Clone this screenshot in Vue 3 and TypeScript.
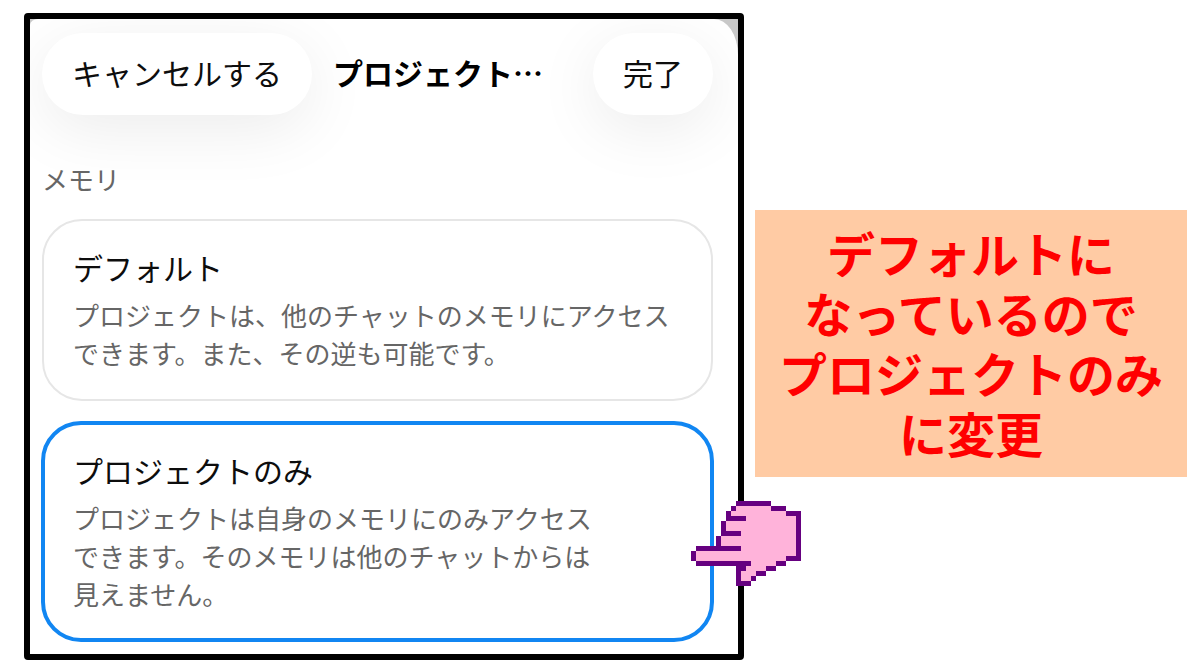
<script setup lang="ts">
import { ref } from 'vue'

interface MemoryOption {
  id: string
  title: string
  lines: string[]
}

const options: MemoryOption[] = [
  {
    id: 'default',
    title: 'デフォルト',
    lines: ['プロジェクトは、他のチャットのメモリにアクセス', 'できます。また、その逆も可能です。'],
  },
  {
    id: 'project',
    title: 'プロジェクトのみ',
    lines: [
      'プロジェクトは自身のメモリにのみアクセス',
      'できます。そのメモリは他のチャットからは',
      '見えません。',
    ],
  },
]

const selected = ref('project')

const noteLines = ['デフォルトに', 'なっているので', 'プロジェクトのみ', 'に変更']

// Pixel art: "#" is outline, "o" is fill, "." is empty.
const handRows = [
  '.........#######......',
  '........#ooooooo###...',
  '.......#ooooooooooo###',
  '.......####oooooooooo#',
  '......#oooooooooooooo#',
  '......#oooooooooooooo#',
  '......####ooooooooooo#',
  '.....#ooooooooooooooo#',
  '.....#ooooooooooooooo#',
  '.#########ooooooooooo#',
  '#oooooooooooooooooooo#',
  '#oooooooooooooooooo###',
  '.###########ooooo##...',
  '.........##oooo##.....',
  '.........#ooo##.......',
  '.........#oo#.........',
  '.........###..........',
]

function cells(mark: string): string {
  let d = ''
  handRows.forEach((row, y) => {
    for (let x = 0; x < row.length; x++) {
      if (row[x] === mark) d += `M${x} ${y}h1v1h-1z`
    }
  })
  return d
}

const outline = cells('#')
const fill = cells('o')
</script>

<template>
  <main class="page" lang="ja">
    <div class="phone">
      <div class="frame">
        <section class="sheet">
          <header class="bar">
            <button type="button" class="pill">キャンセルする</button>
            <h1 class="heading">プロジェクト…</h1>
            <button type="button" class="pill">完了</button>
          </header>
          <fieldset class="group">
            <legend class="legend">メモリ</legend>
            <div class="cards">
              <label
                v-for="o in options"
                :key="o.id"
                class="card"
                :class="{ selected: selected === o.id }"
              >
                <input v-model="selected" class="radio" type="radio" name="memory" :value="o.id" />
                <span class="title">{{ o.title }}</span>
                <span class="desc">
                  <span v-for="l in o.lines" :key="l" class="line">{{ l }}</span>
                </span>
              </label>
            </div>
          </fieldset>
        </section>
      </div>
      <svg class="hand" viewBox="0 0 22 17" aria-hidden="true" shape-rendering="crispEdges">
        <path :d="fill" fill="#ffb3da" />
        <path :d="outline" fill="#660080" />
      </svg>
    </div>
    <p class="note">
      <span v-for="l in noteLines" :key="l" class="line">{{ l }}</span>
    </p>
  </main>
</template>

<style>
body {
  margin: 0;
  background: #fff;
}
</style>

<style scoped>
.page {
  display: grid;
  grid-template-columns: 5fr 3fr;
  gap: 11px;
  align-items: start;
  padding: 13px 13px 11px 24px;
  font-family: 'Noto Sans CJK JP', 'Noto Sans', sans-serif;
  color: #0d0d0d;
}
.phone {
  position: relative;
}
.frame {
  border: 6px solid #000;
  border-radius: 4px;
  background: #c8c8c8;
  overflow: hidden;
}
.sheet {
  padding: 14px 25px 12px 12px;
  border-radius: 8px 24px 0 0 / 6px 36px 0 0;
  background: #fff;
  overflow: hidden;
}
.bar {
  display: flex;
  align-items: center;
  gap: 21px;
}
.pill {
  flex: none;
  height: 82px;
  padding: 0 30px 4px;
  border: 0;
  border-radius: 41px;
  background: #fff;
  box-shadow: 0 14px 64px rgba(0, 0, 0, 0.08);
  font: inherit;
  font-size: 30px;
  line-height: 40px;
  color: inherit;
}
.heading {
  flex: 1;
  margin: 0;
  padding-bottom: 4px;
  font-size: 30px;
  line-height: 40px;
  font-weight: 700;
  color: #000;
  white-space: nowrap;
}
.group {
  position: relative;
  min-width: 0;
  margin: 0;
  padding: 0;
  border: 0;
}
.legend {
  padding: 45px 0 21px;
  font-size: 26px;
  line-height: 38px;
  color: #666;
}
.cards {
  display: grid;
  gap: 20px;
}
.card {
  position: relative;
  display: block;
  padding: 26px 29px 27px;
  border: 2px solid #e6e6e6;
  border-radius: 40px;
}
.card.selected {
  margin: 0 -1px;
  padding: 25px 28px;
  border: 4px solid #1186f2;
}
.radio {
  position: absolute;
  inset: 0;
  margin: 0;
  opacity: 0;
}
.title {
  display: block;
  margin-bottom: 9px;
  font-size: 30px;
  line-height: 40px;
}
.desc {
  display: block;
  font-size: 26px;
  line-height: 38px;
  color: #666;
}
.line {
  display: block;
  white-space: nowrap;
}
.hand {
  position: absolute;
  top: 488px;
  right: -57px;
  width: 110px;
  height: 85px;
}
.note {
  margin: 197px 0 0;
  padding: 12px 0 15px;
  background: #ffcba4;
  color: #f00;
  font-size: 48px;
  line-height: 60px;
  font-weight: 700;
  text-align: center;
}
</style>
